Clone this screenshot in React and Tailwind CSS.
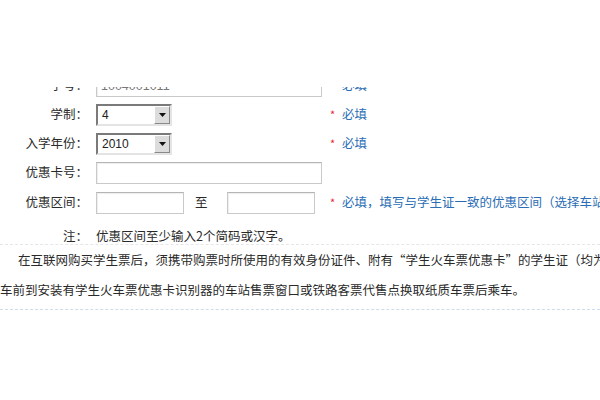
import React from 'react'

const Label = ({ children }) => (
    <div className="w-[88px] text-right shrink-0">{children}</div>
)

const Required = ({ children }) => (
    <div className="flex items-center whitespace-nowrap">
        <span className="text-[#e8262b] text-[11px] w-[12px]">*</span>
        <span className="text-[#2a6db5]">{children}</span>
    </div>
)

const TextBox = ({ w = 'w-[226px]', value }) => (
    <div className={`${w} h-[22px] border border-[#c9c9c9] border-t-[#b5b5b5] bg-white shadow-[inset_1px_1px_1px_#eeeeee] pl-[4px] leading-[20px] text-[#777] font-['Liberation_Sans',sans-serif]`}>
        {value}
    </div>
)

const FakeSelect = ({ value }) => (
    <div className="w-[76px] h-[22px] flex border-2 border-t-[#7a7a7a] border-l-[#7a7a7a] border-r-[#e4e4e4] border-b-[#e4e4e4] bg-white">
        <div className="flex-1 pl-[4px] leading-[18px] text-[#222] font-['Liberation_Sans',sans-serif] text-[12px]">{value}</div>
        <div className="w-[16px] h-full bg-[#dcdcdc] border border-t-white border-l-white border-r-[#8a8a8a] border-b-[#8a8a8a] flex items-center justify-center">
            <svg width="7" height="4" viewBox="0 0 7 4"><path d="M0 0h7L3.5 4z" fill="#111" /></svg>
        </div>
    </div>
)

const Row = ({ label, children, note, h = 'h-[29px]' }) => (
    <div className={`flex items-center ${h} shrink-0`}>
        <Label>{label}</Label>
        <div className="ml-[8px] w-[226px] shrink-0 flex items-center">{children}</div>
        <div className="ml-[8px]">{note}</div>
    </div>
)

export default function App() {
    return (
        <div className="w-[600px] h-[400px] bg-white overflow-hidden text-[12.5px] text-[#2a2a2a] font-['Noto_Sans_CJK_SC',sans-serif]">
            <div className="h-[87px]"></div>

            <div className="h-[13px] overflow-hidden flex flex-col justify-end">
                <Row label="学号：" note={<Required>必填</Required>}>
                    <TextBox value="1004001011" />
                </Row>
            </div>

            <Row label="学制：" note={<Required>必填</Required>}>
                <FakeSelect value="4" />
            </Row>

            <Row label="入学年份：" note={<Required>必填</Required>}>
                <FakeSelect value="2010" />
            </Row>

            <Row label="优惠卡号：">
                <TextBox />
            </Row>

            <Row label="优惠区间：" h="h-[31px]" note={<Required>必填，填写与学生证一致的优惠区间（选择车站后</Required>}>
                <TextBox w="w-[88px]" />
                <span className="ml-[11px] w-[32px]">至</span>
                <TextBox w="w-[88px]" />
            </Row>

            <div className="flex h-[26px] pt-[10px] leading-[16px]">
                <Label>注：</Label>
                <div className="ml-[8px] whitespace-nowrap">优惠区间至少输入2个简码或汉字。</div>
            </div>

            <div className="border-t border-[#e6e6e6] pb-[4px] border-b border-b-[#cfdcec] border-dashed">
                <p className="leading-[30px] whitespace-nowrap pl-[18px]">
                    在互联网购买学生票后，须携带购票时所使用的有效身份证件、附有“学生火车票优惠卡”的学生证（均为原件），在乘
                </p>
                <p className="leading-[30px] whitespace-nowrap">
                    车前到安装有学生火车票优惠卡识别器的车站售票窗口或铁路客票代售点换取纸质车票后乘车。
                </p>
            </div>
        </div>
    )
}
